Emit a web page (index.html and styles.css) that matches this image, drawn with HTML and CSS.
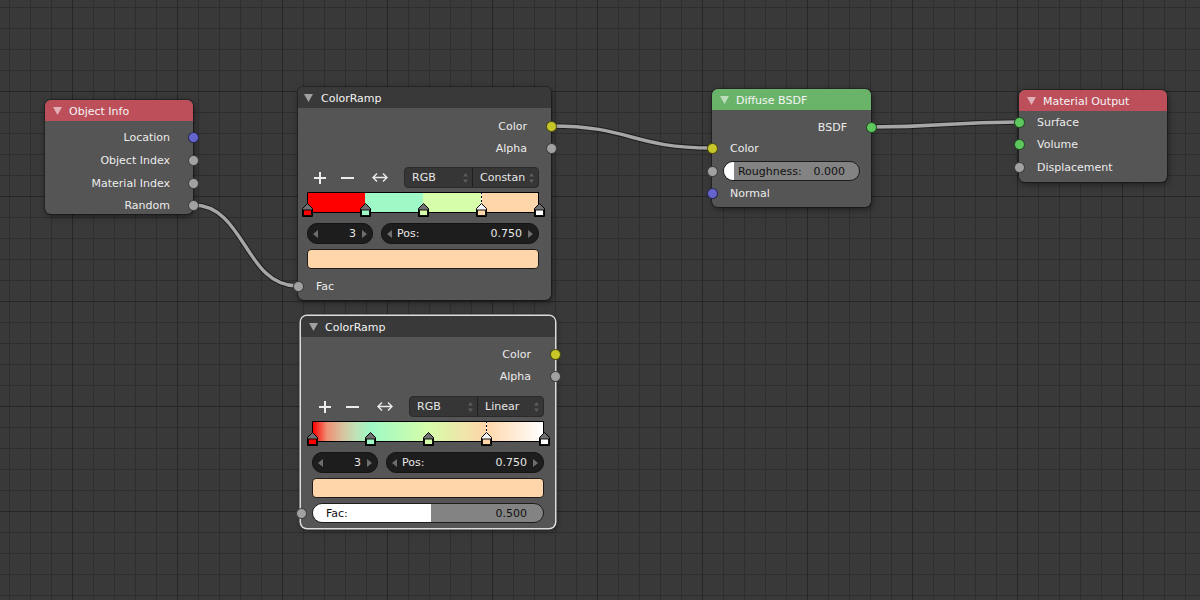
FILE: index.html
```html
<!DOCTYPE html>
<html>
<head>
<meta charset="utf-8">
<title>Node Editor</title>
<link rel="stylesheet" href="styles.css">
</head>
<body>
<div class="editor">
  <svg class="links" width="1200" height="600" viewBox="0 0 1200 600">
    <g class="link-shadow">
      <path d="M193 205 C245 205 245 286 297 286"/>
      <path d="M551 126 C631 126 632 148 712 148"/>
      <path d="M871 127 C945 127 945 122 1019 122"/>
    </g>
    <g class="link-core">
      <path d="M193 205 C245 205 245 286 297 286"/>
      <path d="M551 126 C631 126 632 148 712 148"/>
      <path d="M871 127 C945 127 945 122 1019 122"/>
    </g>
  </svg>

  <!-- Object Info -->
  <div class="node n-objinfo">
    <div class="head head-red"><svg class="tri" viewBox="0 0 9 8"><polygon points="0,0 9,0 4.5,8"/></svg><span>Object Info</span></div>
    <div class="body">
      <div class="row out"><span>Location</span><i class="sock s-vec"></i></div>
      <div class="row out"><span>Object Index</span><i class="sock s-val"></i></div>
      <div class="row out"><span>Material Index</span><i class="sock s-val"></i></div>
      <div class="row out"><span>Random</span><i class="sock s-val"></i></div>
    </div>
  </div>

  <!-- ColorRamp (constant) -->
  <div class="node n-ramp1">
    <div class="head head-dark"><svg class="tri" viewBox="0 0 9 8"><polygon points="0,0 9,0 4.5,8"/></svg><span>ColorRamp</span></div>
    <div class="body">
      <div class="row out"><span>Color</span><i class="sock s-col"></i></div>
      <div class="row out"><span>Alpha</span><i class="sock s-val"></i></div>
      <div class="tools w">
        <span class="tool t1"><svg width="12" height="12" viewBox="0 0 12 12"><path d="M6 0V12M0 6H12"/></svg></span>
        <span class="tool t2"><svg width="13" height="12" viewBox="0 0 13 12"><path d="M0 6H13"/></svg></span>
        <span class="tool t3"><svg class="lr" width="16" height="11" viewBox="0 0 16 11"><path d="M1 5.5H15M5 1.5L1 5.5L5 9.5M11 1.5L15 5.5L11 9.5"/></svg></span>
        <div class="dd">
          <span class="seg seg1">RGB<svg class="ud" viewBox="0 0 5 12"><polygon points="0,4.5 2.5,1 5,4.5"/><polygon points="0,7.5 2.5,11 5,7.5"/></svg></span>
          <span class="seg seg2">Constan<svg class="ud" viewBox="0 0 5 12"><polygon points="0,4.5 2.5,1 5,4.5"/><polygon points="0,7.5 2.5,11 5,7.5"/></svg></span>
        </div>
      </div>
      <div class="ramp w">
        <div class="bar bar-const"></div>
        <span class="dash" style="left:75%"></span>
        <svg class="stop" style="left:0%" viewBox="0 0 11 14"><polygon points="0.5,13.5 0.5,5.5 5.5,0.5 10.5,5.5 10.5,13.5"/><rect x="1.5" y="7" width="8" height="5.5" fill="#ff0000"/></svg>
        <svg class="stop" style="left:25%" viewBox="0 0 11 14"><polygon points="0.5,13.5 0.5,5.5 5.5,0.5 10.5,5.5 10.5,13.5"/><rect x="1.5" y="7" width="8" height="5.5" fill="#9ef9c6"/></svg>
        <svg class="stop" style="left:50%" viewBox="0 0 11 14"><polygon points="0.5,13.5 0.5,5.5 5.5,0.5 10.5,5.5 10.5,13.5"/><rect x="1.5" y="7" width="8" height="5.5" fill="#d6fda9"/></svg>
        <svg class="stop active" style="left:75%" viewBox="0 0 11 14"><polygon points="0.5,13.5 0.5,5.5 5.5,0.5 10.5,5.5 10.5,13.5"/><rect x="1.5" y="7" width="8" height="5.5" fill="#ffd6aa"/></svg>
        <svg class="stop" style="left:100%" viewBox="0 0 11 14"><polygon points="0.5,13.5 0.5,5.5 5.5,0.5 10.5,5.5 10.5,13.5"/><rect x="1.5" y="7" width="8" height="5.5" fill="#ffffff"/></svg>
      </div>
      <div class="fields w">
        <div class="nf nf-count"><svg class="arr" viewBox="0 0 5 8"><polygon points="5,0 0,4 5,8"/></svg><span class="grow"></span><span class="val">3</span><svg class="arr" viewBox="0 0 5 8"><polygon points="0,0 5,4 0,8"/></svg></div>
        <div class="nf nf-pos"><svg class="arr" viewBox="0 0 5 8"><polygon points="5,0 0,4 5,8"/></svg><span class="lbl">Pos:</span><span class="grow"></span><span class="val">0.750</span><svg class="arr" viewBox="0 0 5 8"><polygon points="0,0 5,4 0,8"/></svg></div>
      </div>
      <div class="swatch w"></div>
      <div class="row in fac-row"><i class="sock s-val"></i><span>Fac</span></div>
    </div>
  </div>

  <!-- ColorRamp (linear, selected) -->
  <div class="node n-ramp2 selected">
    <div class="head head-dark"><svg class="tri" viewBox="0 0 9 8"><polygon points="0,0 9,0 4.5,8"/></svg><span>ColorRamp</span></div>
    <div class="body">
      <div class="row out"><span>Color</span><i class="sock s-col"></i></div>
      <div class="row out"><span>Alpha</span><i class="sock s-val"></i></div>
      <div class="tools w">
        <span class="tool t1"><svg width="12" height="12" viewBox="0 0 12 12"><path d="M6 0V12M0 6H12"/></svg></span>
        <span class="tool t2"><svg width="13" height="12" viewBox="0 0 13 12"><path d="M0 6H13"/></svg></span>
        <span class="tool t3"><svg class="lr" width="16" height="11" viewBox="0 0 16 11"><path d="M1 5.5H15M5 1.5L1 5.5L5 9.5M11 1.5L15 5.5L11 9.5"/></svg></span>
        <div class="dd">
          <span class="seg seg1">RGB<svg class="ud" viewBox="0 0 5 12"><polygon points="0,4.5 2.5,1 5,4.5"/><polygon points="0,7.5 2.5,11 5,7.5"/></svg></span>
          <span class="seg seg2">Linear<svg class="ud" viewBox="0 0 5 12"><polygon points="0,4.5 2.5,1 5,4.5"/><polygon points="0,7.5 2.5,11 5,7.5"/></svg></span>
        </div>
      </div>
      <div class="ramp w">
        <div class="bar bar-lin"></div>
        <span class="dash" style="left:75%"></span>
        <svg class="stop" style="left:0%" viewBox="0 0 11 14"><polygon points="0.5,13.5 0.5,5.5 5.5,0.5 10.5,5.5 10.5,13.5"/><rect x="1.5" y="7" width="8" height="5.5" fill="#ff0000"/></svg>
        <svg class="stop" style="left:25%" viewBox="0 0 11 14"><polygon points="0.5,13.5 0.5,5.5 5.5,0.5 10.5,5.5 10.5,13.5"/><rect x="1.5" y="7" width="8" height="5.5" fill="#9ef9c6"/></svg>
        <svg class="stop" style="left:50%" viewBox="0 0 11 14"><polygon points="0.5,13.5 0.5,5.5 5.5,0.5 10.5,5.5 10.5,13.5"/><rect x="1.5" y="7" width="8" height="5.5" fill="#d6fda9"/></svg>
        <svg class="stop active" style="left:75%" viewBox="0 0 11 14"><polygon points="0.5,13.5 0.5,5.5 5.5,0.5 10.5,5.5 10.5,13.5"/><rect x="1.5" y="7" width="8" height="5.5" fill="#ffd6aa"/></svg>
        <svg class="stop" style="left:100%" viewBox="0 0 11 14"><polygon points="0.5,13.5 0.5,5.5 5.5,0.5 10.5,5.5 10.5,13.5"/><rect x="1.5" y="7" width="8" height="5.5" fill="#ffffff"/></svg>
      </div>
      <div class="fields w">
        <div class="nf nf-count"><svg class="arr" viewBox="0 0 5 8"><polygon points="5,0 0,4 5,8"/></svg><span class="grow"></span><span class="val">3</span><svg class="arr" viewBox="0 0 5 8"><polygon points="0,0 5,4 0,8"/></svg></div>
        <div class="nf nf-pos"><svg class="arr" viewBox="0 0 5 8"><polygon points="5,0 0,4 5,8"/></svg><span class="lbl">Pos:</span><span class="grow"></span><span class="val">0.750</span><svg class="arr" viewBox="0 0 5 8"><polygon points="0,0 5,4 0,8"/></svg></div>
      </div>
      <div class="swatch w"></div>
      <div class="row in slider-row"><i class="sock s-val"></i>
        <div class="slider fac-slider w"><div class="fill" style="width:51.5%"></div><span>Fac:</span><span>0.500</span></div>
      </div>
    </div>
  </div>

  <!-- Diffuse BSDF -->
  <div class="node n-diffuse">
    <div class="head head-green"><svg class="tri" viewBox="0 0 9 8"><polygon points="0,0 9,0 4.5,8"/></svg><span>Diffuse BSDF</span></div>
    <div class="body">
      <div class="row out"><span>BSDF</span><i class="sock s-sh"></i></div>
      <div class="row in r-color"><i class="sock s-col"></i><span>Color</span></div>
      <div class="row in slider-row"><i class="sock s-val"></i>
        <div class="slider rough w"><div class="fill" style="width:10px"></div><span>Roughness:</span><span>0.000</span></div>
      </div>
      <div class="row in r-normal"><i class="sock s-vec"></i><span>Normal</span></div>
    </div>
  </div>

  <!-- Material Output -->
  <div class="node n-matout">
    <div class="head head-red"><svg class="tri" viewBox="0 0 9 8"><polygon points="0,0 9,0 4.5,8"/></svg><span>Material Output</span></div>
    <div class="body">
      <div class="row in"><i class="sock s-sh"></i><span>Surface</span></div>
      <div class="row in"><i class="sock s-sh"></i><span>Volume</span></div>
      <div class="row in"><i class="sock s-val"></i><span>Displacement</span></div>
    </div>
  </div>
</div>
</body>
</html>
```

FILE: styles.css
```css
* { box-sizing: border-box; }
html, body { margin: 0; padding: 0; }
body {
  width: 1200px;
  height: 600px;
  overflow: hidden;
  background: #393939;
  font-family: "DejaVu Sans", "Liberation Sans", sans-serif;
  font-size: 11px;
  color: #ececec;
}

.editor {
  position: relative;
  width: 1200px;
  height: 600px;
  background-color: #393939;
  background-image:
    linear-gradient(90deg, #262626 1px, transparent 1px),
    linear-gradient(180deg, #262626 1px, transparent 1px),
    linear-gradient(90deg, #2e2e2e 1px, transparent 1px),
    linear-gradient(180deg, #2e2e2e 1px, transparent 1px);
  background-size: 105px 105px, 105px 105px, 21px 21px, 21px 21px;
  background-position: 72px 0, 0 91px, 9px 0, 0 7px;
}

/* links */
.links { position: absolute; left: 0; top: 0; }
.link-shadow path { fill: none; stroke: rgba(0, 0, 0, 0.45); stroke-width: 5.5; }
.link-core path { fill: none; stroke: #a6a6a6; stroke-width: 3.4; }

/* nodes */
.node {
  position: absolute;
  background: #555555;
  border-radius: 6px;
  box-shadow: 0 0 0 1px rgba(0, 0, 0, 0.28), 1px 2px 6px rgba(0, 0, 0, 0.5);
}
.node.selected {
  box-shadow: 0 0 0 1.5px #dcdcdc, 1px 2px 6px rgba(0, 0, 0, 0.5);
}
.head {
  height: 21px;
  display: flex;
  align-items: center;
  gap: 7px;
  padding-left: 8px;
  padding-top: 1px;
  border-radius: 6px 6px 0 0;
  color: #f4f4f4;
}
.head-red { background: #bd4f5b; }
.head-green { background: #6ab46a; }
.head-dark { background: #393939; }
.tri { width: 9px; height: 8px; flex-shrink: 0; }
.tri polygon { fill: rgba(255, 255, 255, 0.55); }
.head-dark .tri polygon { fill: #a0a0a0; }

.body { display: flex; flex-direction: column; }
.row {
  position: relative;
  height: 22px;
  display: flex;
  align-items: center;
  flex-shrink: 0;
}
.row.out { justify-content: flex-end; padding-right: 24px; }
.row.in { padding-left: 18px; }

.sock {
  position: absolute;
  top: 50%;
  width: 11px;
  height: 11px;
  margin-top: -5.5px;
  border-radius: 50%;
  border: 1px solid rgba(0, 0, 0, 0.6);
}
.out .sock { right: -5.5px; }
.in .sock { left: -5.5px; }
.s-vec { background: #6464cc; }
.s-val { background: #a1a1a1; }
.s-col { background: #c7c729; }
.s-sh { background: #5ec75e; }

/* node placement on the canvas */
.n-objinfo { left: 45px; top: 100px; width: 148px; height: 114px; }
.n-objinfo .body { padding-top: 5.4px; }
.n-objinfo .row { height: 22.67px; }
.n-objinfo .row.out { padding-right: 23px; }

.n-ramp1 { left: 298px; top: 87px; width: 253px; height: 213px; --pl: 9px; --pr: 12px; }
.n-ramp1 .head { padding-left: 6px; gap: 8px; }
.n-ramp1 .body { padding-top: 7px; }

.n-ramp2 { left: 301px; top: 316px; width: 254px; height: 212px; --pl: 11px; --pr: 11px; }
.n-ramp2 .body { padding-top: 6px; }
.n-ramp2 .tools { margin-top: 9px; }

.n-diffuse { left: 712px; top: 89px; width: 159px; height: 118px; --pl: 11px; --pr: 11px; }
.n-diffuse .body { padding-top: 6px; }
.n-diffuse .r-color { height: 20px; }
.n-diffuse .slider-row { margin-top: 3px; }
.n-diffuse .r-normal { margin-top: 1px; }

.n-matout { left: 1019px; top: 90px; width: 148px; height: 92px; }
.n-matout .row { height: 22.6px; }

/* widgets */
.w { margin-left: var(--pl); margin-right: var(--pr); }

.tools {
  height: 21px;
  margin-top: 8px;
  display: flex;
  align-items: center;
  flex-shrink: 0;
}
.tool { display: flex; justify-content: center; align-items: center; height: 21px; }
.t1 { width: 25px; }
.t2 { width: 30px; }
.t3 { width: 35px; }
.tool svg { display: block; fill: none; stroke: #ececec; stroke-width: 2; }
.tool svg.lr { stroke-width: 1.4; }

.dd {
  margin-left: auto;
  width: 135px;
  height: 21px;
  display: flex;
  background: #363636;
  border: 1px solid #2a2a2a;
  border-radius: 4px;
  color: #e6e6e6;
}
.seg {
  display: flex;
  align-items: center;
  justify-content: space-between;
  padding: 0 4px 0 7px;
  white-space: nowrap;
}
.seg1 { width: 68px; border-right: 1px solid #1f1f1f; }
.seg2 { flex: 1; }
.ud { width: 5px; height: 12px; flex-shrink: 0; }
.ud polygon { fill: #5c5c5c; }

.ramp { position: relative; height: 25px; margin-top: 4px; flex-shrink: 0; }
.bar {
  position: absolute;
  left: 0;
  right: 0;
  top: 0;
  height: 21px;
  border: 1px solid #000;
}
.bar-const {
  background: linear-gradient(90deg, #ff0000 0 24.8%, #9ef9c6 24.8% 50%, #d6fda9 50% 75%, #ffd6aa 75% 100%);
}
.bar-lin {
  background: linear-gradient(90deg, #ff0000 0%, #ef8f73 6%, #d8c09d 12.5%, #bfe3b6 18.75%, #9ef9c6 25%, #d6fda9 50%, #ffd6aa 75%, #ffffff 100%);
}
.dash {
  position: absolute;
  top: 0;
  width: 1px;
  height: 12px;
  margin-left: -0.5px;
  background: repeating-linear-gradient(180deg, #000 0 2px, #fff 2px 4px);
}
.stop {
  position: absolute;
  top: 11px;
  width: 11px;
  height: 14px;
  margin-left: -5.5px;
}
.stop polygon { fill: #707070; stroke: #000; stroke-width: 1; }
.stop rect { stroke: #000; stroke-width: 0.9; }
.stop.active polygon { fill: #f4f4f4; }

.fields { display: flex; gap: 8px; height: 21px; margin-top: 6px; flex-shrink: 0; }
.nf {
  display: flex;
  align-items: center;
  height: 21px;
  padding: 0 5px;
  background: #1d1d1d;
  border: 1px solid #141414;
  border-radius: 10px;
  color: #e6e6e6;
}
.nf-count { width: 66px; }
.nf-pos { flex: 1; }
.arr { width: 5px; height: 8px; flex-shrink: 0; }
.arr polygon { fill: #6e6e6e; }
.grow { flex: 1; }
.nf .lbl { margin-left: 5px; }
.nf .val { margin-right: 6px; }

.swatch {
  height: 20px;
  margin-top: 5px;
  background: #ffd6aa;
  border: 1px solid #1c1c1c;
  border-radius: 4px;
  flex-shrink: 0;
}
.fac-row { margin-top: 6px; }

.slider-row { height: 20px; padding: 0 !important; }
.n-ramp2 .slider-row { margin-top: 5px; }
.slider {
  position: relative;
  flex: 1;
  height: 20px;
  display: flex;
  align-items: center;
  border: 1px solid #1c1c1c;
  border-radius: 10px;
  background: #838383;
  color: #111;
  overflow: hidden;
}
.slider .fill { position: absolute; left: 0; top: 0; bottom: 0; background: #ffffff; }
.slider span { position: relative; }
.fac-slider { justify-content: space-between; padding: 0 16px 0 13px; }
.rough { justify-content: center; gap: 12px; }
```
